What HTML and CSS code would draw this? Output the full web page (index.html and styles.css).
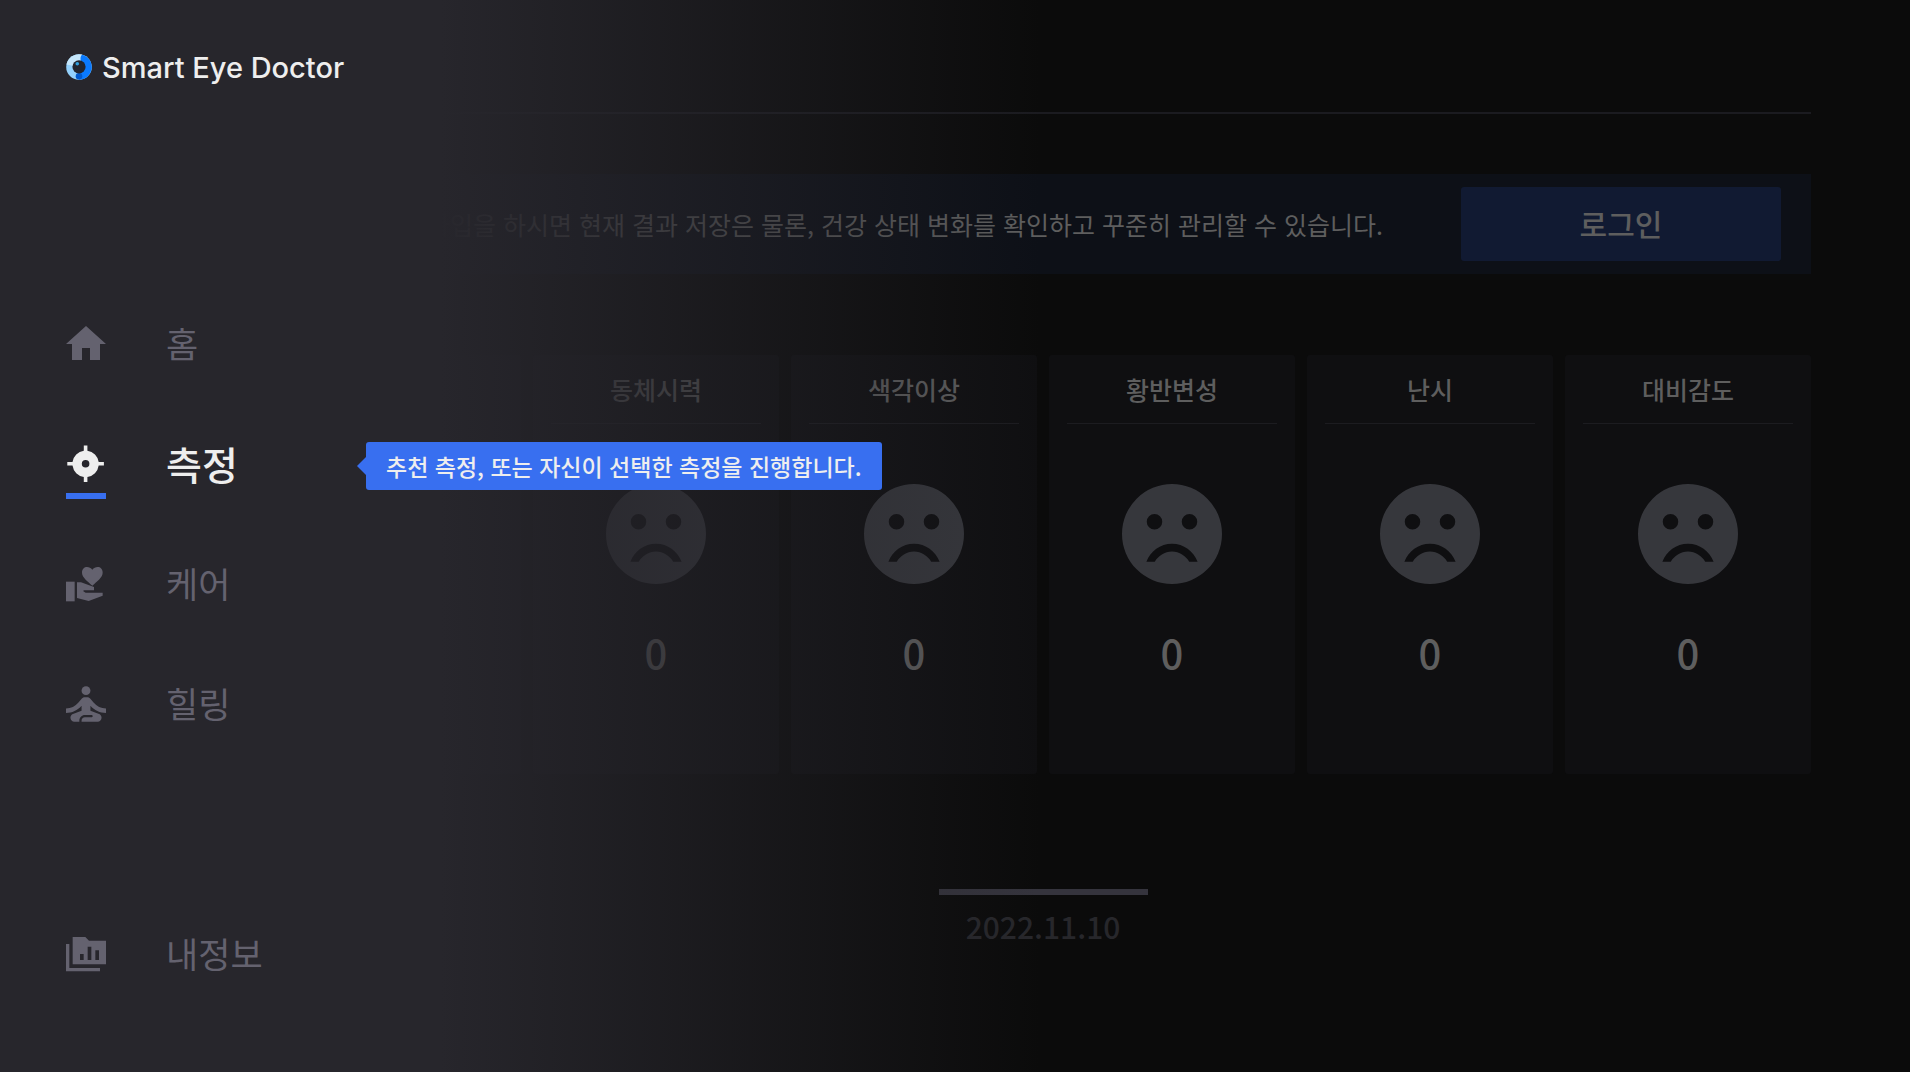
FILE: index.html
```html
<!DOCTYPE html>
<html lang="ko">

<head>
    <meta charset="UTF-8">
    <meta name="viewport" content="width=device-width, initial-scale=1.0">
    <title>Smart Eye Doctor</title>
    <link rel="stylesheet" href="styles.css">
</head>

<body>
    <!-- shared face icon -->
    <svg class="defs" aria-hidden="true">
        <symbol id="sad" viewBox="2 2 20 20">
            <path fill-rule="evenodd" d="M12 2a10 10 0 1 0 0 20 10 10 0 0 0 0-20zM8.500 8a1.550 1.550 0 1 1 0 3.100 1.550 1.550 0 0 1 0-3.100zM15.500 8a1.550 1.550 0 1 1 0 3.100 1.550 1.550 0 0 1 0-3.100zM12 13.950c-2.330 0-4.320 1.500-5.120 3.600h1.670c.69-1.190 1.970-2.050 3.450-2.050s2.750.86 3.450 2.050h1.670c-.8-2.100-2.790-3.600-5.120-3.600z" />
        </symbol>
    </svg>

    <main class="content">
        <header class="top"></header>

        <section class="banner">
            <p>회원가입을 하시면 현재 결과 저장은 물론, 건강 상태 변화를 확인하고 꾸준히 관리할 수 있습니다.</p>
            <button class="login">로그인</button>
        </section>

        <section class="cards">
            <article class="card blank"></article>
            <article class="card">
                <h2>동체시력</h2>
                <svg class="face"><use href="#sad" /></svg>
                <p class="score">0</p>
            </article>
            <article class="card">
                <h2>색각이상</h2>
                <svg class="face"><use href="#sad" /></svg>
                <p class="score">0</p>
            </article>
            <article class="card">
                <h2>황반변성</h2>
                <svg class="face"><use href="#sad" /></svg>
                <p class="score">0</p>
            </article>
            <article class="card">
                <h2>난시</h2>
                <svg class="face"><use href="#sad" /></svg>
                <p class="score">0</p>
            </article>
            <article class="card">
                <h2>대비감도</h2>
                <svg class="face"><use href="#sad" /></svg>
                <p class="score">0</p>
            </article>
        </section>

        <div class="date">
            <time datetime="2022-11-10">2022.11.10</time>
        </div>
    </main>

    <aside class="sidebar">
        <div class="brand">
            <svg class="logo" viewBox="0 0 26 26">
                <circle cx="13" cy="13" r="12.800" fill="#93d0fb" />
                <path d="M13 13L.5 10.500A12.800 12.800 0 0 1 16 .6z" fill="#c5e6fb" />
                <path d="M13 13c4-3 2-5 1.500-8 0-2 .5-4 2-4.300A12.800 12.800 0 0 1 13 25.800z" fill="#0a7aff" />
                <circle cx="13" cy="22.300" r="3.300" fill="#0058cc" />
                <circle cx="13" cy="12.800" r="6.600" fill="#22252e" />
                <circle cx="11.300" cy="9.800" r="1.800" fill="#2fa0e0" />
            </svg>
            <span>Smart Eye Doctor</span>
        </div>

        <nav class="menu">
            <a class="item" href="#home">
                <svg viewBox="2 2 20 20"><path d="M10 20v-6h4v6h5v-8h3L12 3 2 12h3v8z" /></svg>
                <span>홈</span>
            </a>
            <a class="item active" href="#measure">
                <svg viewBox="0 0 40 40">
                    <path fill-rule="evenodd" d="M17.800 1.500h3.600v5.200a13.200 13.200 0 0 1 11.300 11.300h5.200v3.600h-5.200a13.200 13.200 0 0 1-11.300 11.300v5.200h-3.600v-5.200a13.200 13.200 0 0 1-11.300-11.300H1.300v-3.600h5.200a13.200 13.200 0 0 1 11.300-11.300zM19.600 16a3.800 3.800 0 1 0 0 7.600 3.800 3.800 0 0 0 0-7.600z" />
                </svg>
                <span>측정</span>
                <div class="tooltip">추천 측정, 또는 자신이 선택한 측정을 진행합니다.</div>
            </a>
            <a class="item" href="#care">
                <svg viewBox="0 -8 120 120">
                    <path d="M0 45h26v59H0z" />
                    <path d="M33 47h12l39 14v10H53l-1 3 7 4h51v9l-42 16-35-9z" />
                    <path d="M79 57C65 44 48 32 48 18 48 7 55 1 63 1c6 0 12 3 16 8 4-5 10-8 16-8 8 0 15 6 15 17 0 14-17 26-31 39z" />
                </svg>
                <span>케어</span>
            </a>
            <a class="item" href="#healing">
                <svg viewBox="3 3 18 18">
                    <circle cx="12" cy="6" r="2" />
                    <path d="M21 16v-2c-2.240 0-4.160-.96-5.600-2.680l-1.340-1.600C13.680 9.260 13.120 9 12.530 9h-1.050c-.6 0-1.150.26-1.530.72l-1.340 1.600C7.160 13.040 5.240 14 3 14v2c2.770 0 5.190-1.170 7-3.250V15l-3.880 1.550C5.450 16.820 5 17.480 5 18.210 5 19.200 5.800 20 6.790 20H9v-.5c0-1.380 1.120-2.500 2.500-2.500h3c.28 0 .5.22.5.5s-.22.5-.5.5h-3c-.83 0-1.500.67-1.500 1.500v.5h7.210c.99 0 1.790-.8 1.790-1.790 0-.73-.45-1.390-1.120-1.660L14 15v-2.250c1.810 2.080 4.230 3.250 7 3.250z" />
                </svg>
                <span>힐링</span>
            </a>
            <a class="item mypage" href="#mypage">
                <svg viewBox="0 -9 120 120">
                    <path d="M0 21h10v72h92v10H0z" />
                    <path fill-rule="evenodd" d="M20 0h38l11 11h51v71H20zM42 51v18h11V51zM65 29v40h11V29zM88 40v29h11V40z" />
                </svg>
                <span>내정보</span>
            </a>
        </nav>
    </aside>
</body>

</html>
```
FILE: styles.css
```css
* {
    box-sizing: border-box;
}

body {
    position: relative;
    margin: 0;
    min-height: 100vh;
    background-color: #0b0b0b;
    font-family: "Noto Sans CJK KR", sans-serif;
}

h2,
p {
    margin: 0;
}

.defs {
    position: absolute;
    width: 0;
    height: 0;
}

/* dimmed page behind the menu */
.content {
    padding: 0 99px 0 275px;
    color: #5e5e5e;
}

.top {
    height: 114px;
    border-bottom: 2px solid #1b1b20;
}

.banner {
    display: flex;
    align-items: center;
    justify-content: flex-end;
    gap: 78px;
    height: 100px;
    margin-top: 60px;
    padding-right: 30px;
    background-color: #0d1017;
    font-size: 25px;
    white-space: nowrap;
}

.login {
    width: 320px;
    height: 74px;
    padding: 0 0 2px;
    border: none;
    border-radius: 3px;
    background-color: #111a32;
    color: #5e5e5e;
    font-family: inherit;
    font-size: 30px;
    font-weight: 500;
}

.cards {
    display: grid;
    grid-template-columns: repeat(6, 1fr);
    gap: 12px;
    margin-top: 81px;
}

.card {
    display: flex;
    flex-direction: column;
    align-items: center;
    padding: 0 18px 92px;
    border-radius: 3px;
    background-color: #0f0f11;
}

.card h2 {
    width: 100%;
    border-bottom: 1px solid #1c1c20;
    font-size: 25px;
    font-weight: 500;
    line-height: 68px;
    text-align: center;
}

.face {
    width: 100px;
    height: 100px;
    margin-top: 60px;
    fill: #36373c;
}

.score {
    margin-top: 38px;
    font-size: 40px;
    font-weight: 500;
    line-height: 60px;
}

.date {
    width: 209px;
    margin: 115px auto 0;
    padding-top: 11px;
    border-top: 6px solid #35343d;
    color: #27272b;
    font-size: 30px;
    font-weight: 500;
    line-height: 40px;
    text-align: center;
}

/* side menu fading out over the page */
.sidebar {
    position: absolute;
    inset: 0;
    display: flex;
    flex-direction: column;
    padding: 47px 66px 86px;
    background: linear-gradient(to right, #27262c 440px, rgba(39, 38, 44, 0) 1040px);
}

.brand {
    display: flex;
    align-items: center;
    gap: 10px;
    height: 40px;
    color: #eeeeee;
    font-family: Inter, sans-serif;
    font-size: 29px;
    font-weight: 500;
}

.logo {
    width: 26px;
    height: 26px;
}

.menu {
    display: flex;
    flex: 1;
    flex-direction: column;
    gap: 56px;
    margin-top: 225px;
}

.item {
    position: relative;
    display: flex;
    align-items: center;
    gap: 60px;
    width: 240px;
    height: 64px;
    color: #64626f;
    font-size: 35px;
    text-decoration: none;
}

.item span {
    padding-bottom: 3px;
}

.item svg {
    width: 40px;
    height: 40px;
    fill: currentColor;
}

.active {
    color: #eeeeee;
    font-size: 39px;
    font-weight: 500;
}

.active::after {
    content: "";
    position: absolute;
    left: 0;
    bottom: -3px;
    width: 40px;
    height: 6px;
    background-color: #386ff0;
}

.mypage {
    margin-top: auto;
}

.tooltip {
    position: absolute;
    top: 10px;
    left: 300px;
    padding: 0 20px;
    border-radius: 3px;
    background-color: #386ff0;
    font-size: 23px;
    line-height: 48px;
    white-space: nowrap;
}

.tooltip::before {
    content: "";
    position: absolute;
    top: 15px;
    left: -9px;
    border: 9px solid transparent;
    border-right-color: #386ff0;
    border-left: none;
}
```
